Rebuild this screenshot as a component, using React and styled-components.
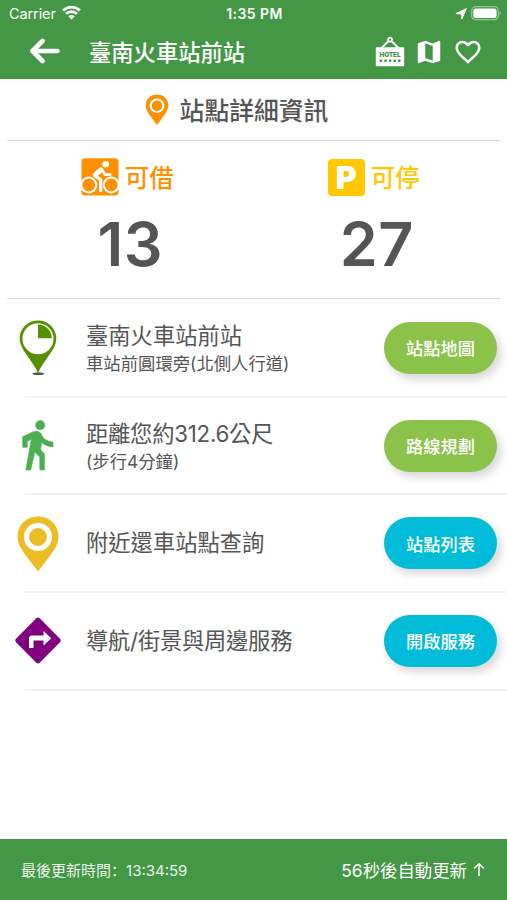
import React from 'react';
import styled, { createGlobalStyle } from 'styled-components';
import { MdMap, MdFavoriteBorder } from 'react-icons/md';

const GlobalStyle = createGlobalStyle`
  body {
    margin: 0;
    background-color: #fff;
    font-family: Inter, 'Noto Sans CJK TC', sans-serif;
    color: #555;
  }
`;

const stations = [
  {
    icon: 'station',
    title: '臺南火車站前站',
    detail: '車站前圓環旁(北側人行道)',
    button: '站點地圖',
    color: '#8bc34a',
  },
  {
    icon: 'walk',
    title: '距離您約312.6公尺',
    detail: '(步行4分鐘)',
    button: '路線規劃',
    color: '#8bc34a',
    tight: true,
  },
  { icon: 'nearby', title: '附近還車站點查詢', button: '站點列表', color: '#00bcd9' },
  { icon: 'direction', title: '導航/街景與周邊服務', button: '開啟服務', color: '#00bcd9', tight: true },
];

const WifiIcon = () => (
  <svg width="19" height="15" viewBox="0 0 19 15">
    <g fill="none" stroke="#fff" strokeWidth="2.7">
      <path d="M1.1 5.5a12 12 0 0 1 16.8 0" />
      <path d="M4 8.9a7.9 7.9 0 0 1 11 0" />
    </g>
    <path d="M6.3 11.3a4.6 4.6 0 0 1 6.4 0l-3.2 3.3z" fill="#fff" />
  </svg>
);

const LocationIcon = () => (
  <svg width="12" height="12" viewBox="0 0 12 12">
    <path d="M11.4.6 6.8 11.1V5.9L.9 5.6z" fill="#fff" stroke="#fff" strokeWidth="1" strokeLinejoin="round" />
  </svg>
);

const BatteryIcon = () => (
  <svg width="31" height="15" viewBox="0 0 31 15">
    <rect x=".7" y=".7" width="26.6" height="13" rx="4" fill="none" stroke="#fff" strokeOpacity=".45" strokeWidth="1.2" />
    <rect x="2.3" y="2.4" width="23.3" height="9.7" rx="2.4" fill="#fff" />
    <path d="M28.7 5q2 2.2 0 4.4z" fill="#fff" opacity=".55" />
  </svg>
);

const BackIcon = () => (
  <svg width="31" height="26" viewBox="0 0 31 26">
    <path
      d="M13.5 3 3.5 13l10 10M4 13H28.5"
      fill="none"
      stroke="#fff"
      strokeWidth="4.6"
      strokeLinecap="round"
      strokeLinejoin="round"
    />
  </svg>
);

const HotelIcon = () => (
  <svg width="30" height="31" viewBox="0 0 30 31">
    <path d="M6 12.5 13 5.5M24 12.5 17 5.5" stroke="#fff" strokeWidth="1.8" />
    <circle cx="15" cy="3.7" r="2" fill="none" stroke="#fff" strokeWidth="1.8" />
    <rect x=".8" y="11.3" width="28.4" height="19" rx=".8" fill="#fff" />
    <text
      x="15"
      y="20.5"
      textAnchor="middle"
      textLength="21"
      lengthAdjust="spacingAndGlyphs"
      fontSize="6.2"
      fontWeight="900"
      fill="#439745"
    >
      HOTEL
    </text>
    <path d="M4.7 24.8H25.5" stroke="#439745" strokeWidth="2.4" strokeDasharray="2.4 2.2" />
  </svg>
);

const SmallPinIcon = () => (
  <svg width="24" height="32" viewBox="0 0 24 32">
    <path d="M12 .5C5.6.5.7 5.3.7 11.5c0 4 2.2 7.2 4.6 10.6L12 31l6.7-8.9c2.4-3.4 4.6-6.6 4.6-10.6C23.3 5.3 18.4.5 12 .5z" fill="#ff9100" />
    <circle cx="12" cy="11.7" r="6.3" fill="none" stroke="#fff" strokeWidth="2" />
  </svg>
);

const BikeIcon = () => (
  <svg width="38" height="38" viewBox="0 0 38 38">
    <rect x=".5" y=".3" width="37" height="37.2" rx="3.5" fill="#ff9100" />
    <g fill="none" stroke="#fff" strokeWidth="2">
      <circle cx="7.8" cy="27" r="7.4" />
      <circle cx="30.2" cy="27" r="7.4" />
    </g>
    <circle cx="24.6" cy="6.3" r="3.3" fill="#fff" />
    <g fill="none" stroke="#fff" strokeLinecap="round" strokeLinejoin="round">
      <path d="M19.8 11.8 14.3 16.8" strokeWidth="5" />
      <path d="M21 12 24 16.6H29.3" strokeWidth="2.8" />
      <path d="M14 17.5 19.7 22V32.5" strokeWidth="3.4" />
    </g>
  </svg>
);

const StationIcon = () => (
  <svg width="38" height="56" viewBox="0 0 38 56">
    <ellipse cx="19.3" cy="53.7" rx="6" ry="1.4" fill="#555" />
    <path d="M19 .4C9 .4.7 8 .7 18c0 8.3 4.9 13.5 9.3 20.3 3.4 5 6.8 9.4 9 15 2.2-5.6 5.6-10 9-15 4.4-6.8 9.3-12 9.3-20.3C37.3 8 29 .4 19 .4z" fill="#559100" />
    <circle cx="19" cy="18.8" r="15.5" fill="#fff" />
    <path d="M19 4.6V18.2H32.8A13.8 13.8 0 0 0 19 4.6z" fill="#559100" />
  </svg>
);

const WalkIcon = () => (
  <svg width="32" height="51" viewBox="0 0 32 51">
    <g fill="#4caf50" stroke="#4caf50" strokeWidth=".6" strokeLinejoin="round">
      <circle cx="18.2" cy="5.2" r="4.6" />
      <path d="M10.8 11.9Q14.5 10.6 17.5 12.2 19.2 13.2 20.2 16 22.2 20.8 31 22.3V27Q23.5 26.3 19.7 22.5L18.4 29.3 22.4 34V50H17.8V37L12.8 32.3 8.7 50H3.8L9.4 19.3 5.3 21.2V27.3H.7V16.7Z" />
    </g>
  </svg>
);

const NearbyIcon = () => (
  <svg width="42" height="56" viewBox="0 0 42 56">
    <path d="M21 .5C9.5.5.5 9 .5 20.5c0 7.5 4.3 13.5 9 20L21 55.5l11.5-15c4.7-6.5 9-12.5 9-20C41.5 9 32.5.5 21 .5z" fill="#edbd26" />
    <circle cx="21" cy="21" r="11.5" fill="none" stroke="#fff" strokeWidth="5" />
  </svg>
);

const DirectionIcon = () => (
  <svg width="46" height="47" viewBox="0 0 46 47">
    <path d="M21.3 1.2q1.7-1.5 3.4 0L45 21.8q1.5 1.7 0 3.4L24.7 45.8q-1.7 1.5-3.4 0L1 25.2q-1.5-1.7 0-3.4z" fill="#800080" />
    <path d="M14 31V21.500q0-3 3-3h11.500v-4.500l7.800 7.300-7.800 7.300V23.600H18.500V31z" fill="#fff" />
  </svg>
);

const icons = {
  station: StationIcon,
  walk: WalkIcon,
  nearby: NearbyIcon,
  direction: DirectionIcon,
};

const ActionRow = ({ item }) => {
  const Icon = icons[item.icon];
  return (
    <Row>
      <IconCell $raised={item.icon !== 'nearby'}>
        <Icon />
      </IconCell>
      <RowText>
        <RowTitle $tight={item.tight}>{item.title}</RowTitle>
        {item.detail && <RowDetail>{item.detail}</RowDetail>}
      </RowText>
      <ActionButton $color={item.color}>{item.button}</ActionButton>
    </Row>
  );
};

const App = () => {
  return (
    <Page>
      <GlobalStyle />
      <Header>
        <StatusBar>
          <Carrier>
            Carrier <WifiIcon />
          </Carrier>
          <Clock>1:35 PM</Clock>
          <StatusIcons>
            <LocationIcon />
            <BatteryIcon />
          </StatusIcons>
        </StatusBar>
        <NavBar>
          <BackIcon />
          <NavTitle>臺南火車站前站</NavTitle>
          <NavIcons>
            <HotelIcon />
            <MdMap size={30} />
            <MdFavoriteBorder size={30} />
          </NavIcons>
        </NavBar>
      </Header>
      <SectionTitle>
        <SmallPinIcon />
        <span>站點詳細資訊</span>
      </SectionTitle>
      <Counts>
        <Count>
          <CountLabel $color="#ff9100">
            <BikeIcon />
            <span>可借</span>
          </CountLabel>
          <CountNumber>13</CountNumber>
        </Count>
        <Count>
          <CountLabel $color="#ffc800">
            <ParkingBadge>P</ParkingBadge>
            <span>可停</span>
          </CountLabel>
          <CountNumber>27</CountNumber>
        </Count>
      </Counts>
      <List>
        {stations.map((item) => (
          <ActionRow key={item.icon} item={item} />
        ))}
      </List>
      <Footer>
        <Updated>
          最後更新時間<Colon>：</Colon>13:34:59
        </Updated>
        <Refresh>
          56秒後自動更新
          <svg width="12" height="15" viewBox="0 0 12 15">
            <path d="M6 14V2M1.2 6.5 6 1.7l4.8 4.8" fill="none" stroke="#fff" strokeWidth="1.5" />
          </svg>
        </Refresh>
      </Footer>
    </Page>
  );
};

const Page = styled.div`
  display: flex;
  flex-direction: column;
  width: 507px;
  height: 900px;
  overflow: hidden;
`;

const Header = styled.header`
  height: 79px;
  background-color: #439745;
  color: #fff;
`;

const StatusBar = styled.div`
  display: grid;
  grid-template-columns: 1fr auto 1fr;
  align-items: center;
  height: 27px;
  padding: 0 5px 0 9px;
  box-sizing: border-box;
  font-size: 14.5px;
`;

const Carrier = styled.div`
  display: flex;
  align-items: center;
  gap: 6px;
  letter-spacing: -0.1px;

  svg {
    margin-top: -2px;
  }
`;

const Clock = styled.div`
  margin-left: -2px;
  font-size: 14px;
  font-weight: 600;
  letter-spacing: 0.45px;
`;

const StatusIcons = styled.div`
  display: flex;
  align-items: center;
  justify-content: flex-end;
  gap: 4px;
`;

const NavBar = styled.div`
  display: flex;
  align-items: center;
  height: 50px;
  padding: 0 24px 0 29px;

  > svg {
    margin-top: -2px;
  }
`;

const NavTitle = styled.h1`
  flex: 1;
  margin: 1px 0 0 29px;
  font-size: 22.3px;
  line-height: 32px;
  font-weight: 500;
`;

const NavIcons = styled.div`
  display: flex;
  align-items: center;
  gap: 9px;

  svg:first-child {
    margin-top: -1px;
  }
`;

const SectionTitle = styled.h2`
  display: flex;
  align-items: center;
  justify-content: center;
  gap: 11px;
  height: 61px;
  margin: 0 7px;
  padding: 0 34px 0 0;
  border-bottom: 1px solid #d8d8d8;
  font-size: 24.8px;
  line-height: 36px;
  font-weight: 500;

  span {
    padding-top: 2px;
  }
`;

const Counts = styled.div`
  display: grid;
  grid-template-columns: 1fr 1fr;
  height: 158px;
  margin: 0 7px;
  box-sizing: border-box;
  border-bottom: 1px solid #d8d8d8;
`;

const Count = styled.div`
  display: flex;
  flex-direction: column;
  align-items: center;
  padding-top: 17px;
`;

const CountLabel = styled.div`
  display: flex;
  align-items: center;
  gap: 6px;
  height: 38px;
  padding-right: 6px;
  color: ${(props) => props.$color};
  font-size: 24.5px;
  line-height: 36px;
  font-weight: 500;

  span {
    padding-top: 1px;
  }
`;

const ParkingBadge = styled.div`
  width: 37px;
  height: 37px;
  border-radius: 4px;
  background-color: #ffc800;
  color: #fff;
  font-size: 32px;
  line-height: 38px;
  font-weight: 900;
  text-align: center;
`;

const CountNumber = styled.div`
  margin-top: 12px;
  font-size: 61px;
  line-height: 72px;
  font-weight: 600;
  letter-spacing: 0.5px;
`;

const List = styled.div`
  flex: 1;
  padding: 1px 0 0 25px;
`;

const Row = styled.div`
  display: flex;
  align-items: center;
  height: 97.7px;
  padding-right: 10px;
  box-sizing: border-box;
  border-bottom: 2px solid #f2f2f2;
`;

const IconCell = styled.div`
  display: flex;
  justify-content: center;
  width: 60px;
  margin: ${(props) => (props.$raised ? '0' : '2px')} 18px 0 -17px;
`;

const RowText = styled.div`
  flex: 1;
`;

const RowTitle = styled.div`
  font-size: 22.3px;
  line-height: 32px;
  letter-spacing: ${(props) => (props.$tight ? '-0.25px' : '0')};
`;

const RowDetail = styled.div`
  font-size: 17.35px;
  line-height: 23px;
`;

const ActionButton = styled.button`
  width: 113px;
  height: 52px;
  padding: 0;
  border: none;
  border-radius: 26px;
  background-color: ${(props) => props.$color};
  color: #fff;
  font-family: inherit;
  font-size: 17.2px;
  font-weight: 500;
  box-shadow: 4px 5px 10px rgba(0, 0, 0, 0.16);
`;

const Footer = styled.footer`
  display: flex;
  align-items: center;
  justify-content: space-between;
  height: 61px;
  padding: 0 22px 0 21px;
  background-color: #439745;
  color: #fff;
`;

const Updated = styled.div`
  font-size: 15px;
  color: #eaf5ea;
`;

const Colon = styled.span`
  font-family: 'Noto Sans CJK SC', sans-serif;
`;

const Refresh = styled.div`
  display: flex;
  align-items: center;
  gap: 6px;
  font-size: 17.4px;
`;

export default App;
